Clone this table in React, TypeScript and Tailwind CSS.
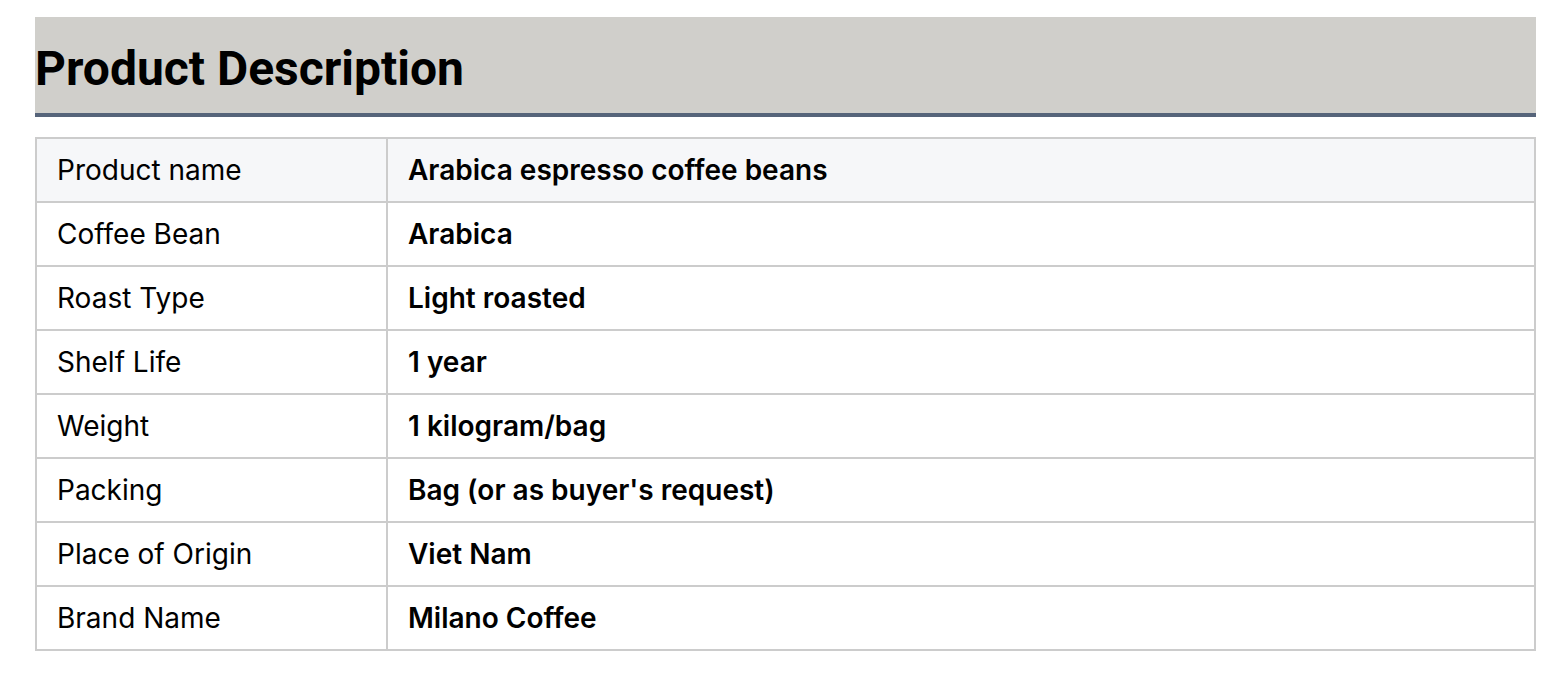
const rows = [
  ["Product name", "Arabica espresso coffee beans"],
  ["Coffee Bean", "Arabica"],
  ["Roast Type", "Light roasted"],
  ["Shelf Life", "1 year"],
  ["Weight", "1 kilogram/bag"],
  ["Packing", "Bag (or as buyer's request)"],
  ["Place of Origin", "Viet Nam"],
  ["Brand Name", "Milano Coffee"],
];

export default function App() {
  return (
    <div className="min-h-[680px] bg-white pl-[35px] pr-[24px] pt-[17px]">
      <div className="flex h-[100px] items-center border-b-4 border-[#56647a] bg-[#d0cfcb] pt-[8px]">
        <h2 className="font-['Roboto',sans-serif] text-[48px] font-bold leading-none text-black">
          Product Description
        </h2>
      </div>
      <table className="mt-[20px] w-full border-collapse font-['Inter',sans-serif] text-[28px] text-black">
        <tbody>
          {rows.map(([label, value], i) => (
            <tr key={label} className={i === 0 ? "bg-[#f6f7f9]" : "bg-white"}>
              <td className="h-[64px] w-[351px] border-2 border-[#cccccc] px-[20px] py-0 align-middle">
                {label}
              </td>
              <td className="h-[64px] border-2 border-[#cccccc] px-[20px] py-0 align-middle font-semibold">
                {value}
              </td>
            </tr>
          ))}
        </tbody>
      </table>
    </div>
  );
}
